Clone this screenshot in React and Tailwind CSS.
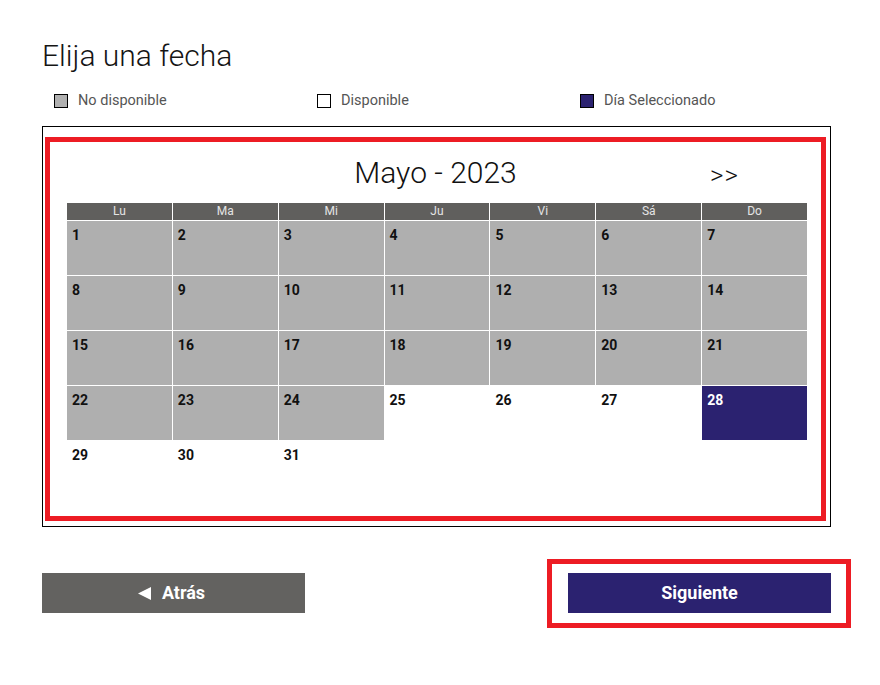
import React from "react";

function Cell({ n, kind }) {
  const cls =
    kind === "gray"
      ? "bg-[#afafaf] text-[#111]"
      : kind === "sel"
      ? "bg-[#2b2270] text-white"
      : "bg-white text-[#111]";
  return (
    <div className={`h-[54px] pl-[5px] pt-[4px] text-[14px] leading-[20px] font-bold ${cls}`}>
      {n}
    </div>
  );
}

export default function App() {
  const days = ["Lu", "Ma", "Mi", "Ju", "Vi", "Sá", "Do"];
  const cells = [];
  for (let d = 1; d <= 35; d++) {
    if (d <= 31) {
      const kind = d <= 24 ? "gray" : d === 28 ? "sel" : "white";
      cells.push(<Cell key={d} n={d} kind={kind} />);
    } else {
      cells.push(<div key={d} className="h-[54px] bg-white" />);
    }
  }
  return (
    <div className="w-[880px] h-[685px] bg-white pl-[42px] pr-[49px] font-['Roboto',_'Liberation_Sans',_sans-serif]">
      <h1 className="pt-[41px] text-[30px] leading-[30px] font-light text-[#151515]">
        Elija una fecha
      </h1>
      <div className="mt-[19px] grid grid-cols-3 h-[20px]">
        <div className="flex items-center pl-[12px] gap-[10px]">
          <span className="w-[14px] h-[14px] border border-black bg-[#b0b0b0]" />
          <span className="text-[14.5px] text-[#555]">No disponible</span>
        </div>
        <div className="flex items-center pl-[12px] gap-[10px]">
          <span className="w-[14px] h-[14px] border border-black bg-white" />
          <span className="text-[14.5px] text-[#555]">Disponible</span>
        </div>
        <div className="flex items-center pl-[12px] gap-[10px]">
          <span className="w-[14px] h-[14px] border border-black bg-[#2b2270]" />
          <span className="text-[14.5px] text-[#555]">Día Seleccionado</span>
        </div>
      </div>

      <div className="mt-[16px] border border-black pt-[10px] pl-[2px] pr-[4px] pb-[5px]">
        <div className="h-[384px] border-[5px] border-[#ed1c24] pt-[16px]">
          <div className="relative h-[30px] flex justify-center items-baseline">
            <span className="text-[30px] leading-[30px] font-light text-[#111]">Mayo - 2023</span>
            <span className="absolute right-[82px] top-[2px] text-[26px] leading-[30px] font-light tracking-[1px] text-[#111]">&gt;&gt;</span>
          </div>
          <div className="mt-[15px] ml-[17px] w-[740px] grid grid-cols-7 gap-px bg-white">
            {days.map((d) => (
              <div key={d} className="h-[17px] bg-[#605f5d] text-center text-[12px] leading-[17px] text-[#e4e4e4]">
                {d}
              </div>
            ))}
            {cells}
          </div>
        </div>
      </div>

      <div className="mt-[46px] grid grid-cols-3">
        <button className="h-[40px] pb-[2px] bg-[#636260] text-white flex items-center justify-center gap-[11px] pr-[4px] text-[18px] font-bold">
          <svg width="13" height="13" viewBox="0 0 13 13" className="mt-[2px]">
            <polygon points="13,0 13,13 0,6.5" fill="white" />
          </svg>
          <span>Atrás</span>
        </button>
        <div />
        <div className="relative">
          <div className="absolute -left-[21px] -right-[20px] -top-[14px] -bottom-[15px] border-[5px] border-[#ed1c24]" />
          <button className="relative w-full h-[40px] pb-[2px] bg-[#2b2270] text-white text-[18px] font-bold flex items-center justify-center">
            Siguiente
          </button>
        </div>
      </div>
    </div>
  );
}
